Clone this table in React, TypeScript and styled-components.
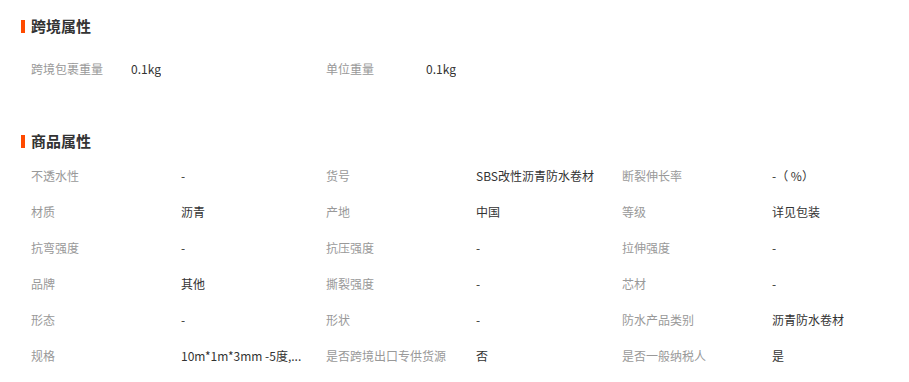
import React from "react";
import styled, { createGlobalStyle } from "styled-components";

const GlobalStyle = createGlobalStyle`
  html, body { margin: 0; padding: 0; background: #fff; }
  body { font-family: "Noto Sans CJK SC", "Noto Sans", sans-serif; }
`;

const Page = styled.div`
  padding: 16px 0 0 21px;
  width: 888px;
  box-sizing: border-box;
`;

const Section = styled.section<{ $gap: number; $after?: number }>`
  display: flex;
  flex-direction: column;
  gap: ${(p) => p.$gap}px;
  margin-bottom: ${(p) => p.$after ?? 0}px;
`;

const Title = styled.h3`
  display: flex;
  align-items: center;
  gap: 6px;
  margin: 0;
  height: 20px;
  font-size: 15px;
  font-weight: 700;
  color: #333;
  line-height: 20px;
  &::before {
    content: "";
    display: block;
    width: 4px;
    height: 13px;
    background: #ff4a00;
  }
`;

const Grid = styled.div<{ $cols: string }>`
  display: grid;
  grid-template-columns: ${(p) => p.$cols};
  padding-left: 10px;
  grid-auto-rows: 36px;
  font-size: 12px;
  line-height: 16px;
`;

const Label = styled.div`
  color: #999;
  display: flex;
  align-items: center;
  white-space: nowrap;
`;

const Value = styled.div`
  color: #333;
  display: flex;
  align-items: center;
  min-width: 0;
  padding-right: 20px;
  span {
    white-space: nowrap;
    overflow: hidden;
    text-overflow: ellipsis;
  }
`;

const cross = [
  ["跨境包裹重量", "0.1kg"],
  ["单位重量", "0.1kg"],
];

const props = [
  ["不透水性", "-"],
  ["货号", "SBS改性沥青防水卷材"],
  ["断裂伸长率", "-（ %）"],
  ["材质", "沥青"],
  ["产地", "中国"],
  ["等级", "详见包装"],
  ["抗弯强度", "-"],
  ["抗压强度", "-"],
  ["拉伸强度", "-"],
  ["品牌", "其他"],
  ["撕裂强度", "-"],
  ["芯材", "-"],
  ["形态", "-"],
  ["形状", "-"],
  ["防水产品类别", "沥青防水卷材"],
  ["规格", "10m*1m*3mm -5度,..."],
  ["是否跨境出口专供货源", "否"],
  ["是否一般纳税人", "是"],
];

export default function App() {
  return (
    <>
      <GlobalStyle />
      <Page>
        <Section $gap={15} $after={44}>
          <Title>跨境属性</Title>
          <Grid $cols="100px 195px 100px 1fr">
            {cross.map(([k, v]) => (
              <React.Fragment key={k}>
                <Label>{k}</Label>
                <Value>
                  <span>{v}</span>
                </Value>
              </React.Fragment>
            ))}
          </Grid>
        </Section>
        <Section $gap={7}>
          <Title>商品属性</Title>
          <Grid $cols="150px 145px 150px 146px 150px 1fr">
            {props.map(([k, v]) => (
              <React.Fragment key={k}>
                <Label>{k}</Label>
                <Value>
                  <span>{v}</span>
                </Value>
              </React.Fragment>
            ))}
          </Grid>
        </Section>
      </Page>
    </>
  );
}
